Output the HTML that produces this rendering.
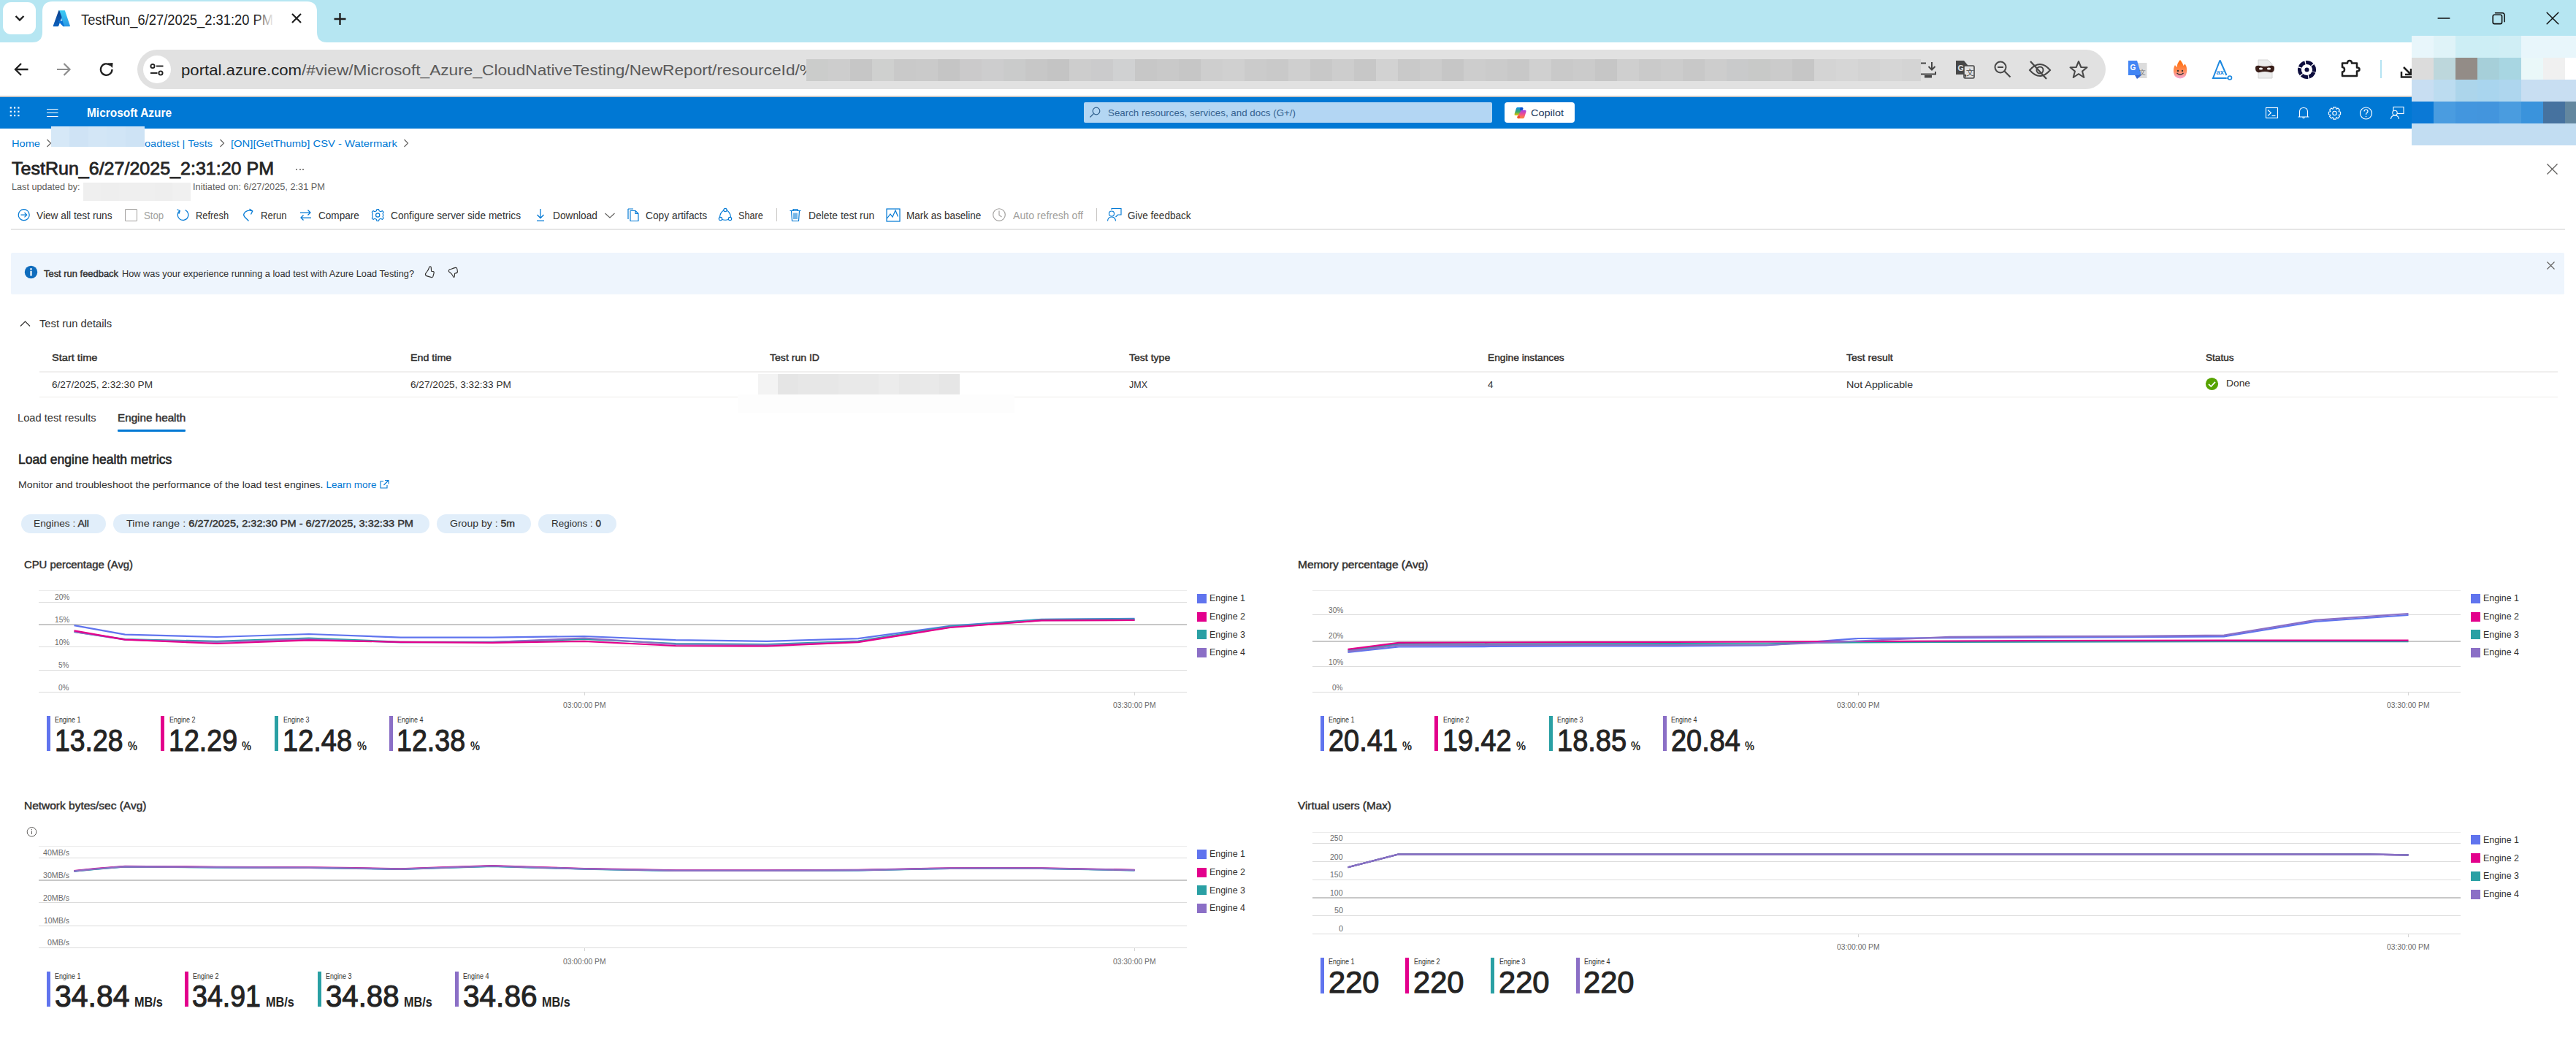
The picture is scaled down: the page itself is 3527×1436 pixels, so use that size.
<!DOCTYPE html>
<html><head><meta charset="utf-8"><title>TestRun_6/27/2025_2:31:20 PM</title>
<style>
html,body{margin:0;padding:0;}
body{width:3527px;height:1436px;overflow:hidden;position:relative;background:#fff;font-family:"Liberation Sans",sans-serif;}
.t{position:absolute;white-space:pre;transform-origin:0 0;}
.t b{font-weight:700;}
.r{position:absolute;}
</style></head><body>
<div class="r" style="left:0px;top:0px;width:3527px;height:58px;background:#b6e6f2;"></div>
<div class="r" style="left:4px;top:3px;width:45px;height:44px;background:#ffffff;border-radius:11px;"></div>
<svg class="r" style="left:18px;top:18px;" width="18" height="14" viewBox="0 0 18 14"><path d="M3.5 4 L9 9.5 L14.5 4" fill="none" stroke="#1f1f1f" stroke-width="2.4"/></svg>
<svg class="r" style="left:44px;top:0px;" width="405" height="58" viewBox="0 0 405 58"><path d="M0 58 Q14 58 14 44 L14 16 Q14 2 28 2 L376 2 Q390 2 390 16 L390 44 Q390 58 404 58 Z" fill="#fff"/></svg>
<svg class="r" style="left:72px;top:13px;" width="25" height="24" viewBox="0 0 25 24"><defs><linearGradient id="az1" x1="0" y1="0" x2="0" y2="1"><stop offset="0" stop-color="#0a3f8a"/><stop offset="1" stop-color="#0f62be"/></linearGradient><linearGradient id="az2" x1="0" y1="0" x2="0" y2="1"><stop offset="0" stop-color="#3ccbf4"/><stop offset="1" stop-color="#2b98e4"/></linearGradient></defs><path d="M8.6 1.2 L16.8 1.2 L24 22.6 Q24 23.2 23.2 23.2 L15.2 23.2 Z" fill="url(#az2)"/><path d="M8.4 1.2 Q9.3 1.2 9.6 2.2 L12.6 10.5 L8.3 22.4 Q8 23.2 7.2 23.2 L1.2 23.2 Q0.4 23.2 0.7 22.4 Z" fill="url(#az1)"/><path d="M7.6 15.4 L13.6 15.4 L16.1 23.2 L14.8 23.2 Q14.4 23.2 14 22.8 L9.4 18 Z" fill="#0b74d8"/></svg>
<div class="t" style="left:111.00px;top:16.57px;font-size:20px;line-height:20px;color:#1f1f1f;transform:scaleX(0.9168);">TestRun_6/27/2025_2:31:20 PM</div>
<div class="r" style="left:350px;top:10px;width:30px;height:32px;background:linear-gradient(90deg,rgba(255,255,255,0),#fff 85%);"></div>
<svg class="r" style="left:398px;top:17px;" width="16" height="16" viewBox="0 0 16 16"><path d="M2 2 L14 14 M14 2 L2 14" stroke="#1f1f1f" stroke-width="2.2"/></svg>
<svg class="r" style="left:456px;top:17px;" width="19" height="18" viewBox="0 0 19 18"><path d="M9.5 1 V17 M1.5 9 H17.5" stroke="#1f1f1f" stroke-width="2.4"/></svg>
<svg class="r" style="left:3336px;top:15px;" width="20" height="20" viewBox="0 0 20 20"><path d="M2.2 10 H17.8" stroke="#111" stroke-width="1.6" stroke-linecap="round"/></svg>
<svg class="r" style="left:3410px;top:15px;" width="22" height="21" viewBox="0 0 22 21"><rect x="3.2" y="5.2" width="12.4" height="12.4" rx="2.2" fill="none" stroke="#111" stroke-width="1.6"/><path d="M6.6 2.8 H16.2 Q19 2.8 19 5.8 V14.8" fill="none" stroke="#111" stroke-width="1.6" stroke-linecap="round"/></svg>
<svg class="r" style="left:3485px;top:15px;" width="20" height="20" viewBox="0 0 20 20"><path d="M2.2 2.2 L17.8 17.8 M17.8 2.2 L2.2 17.8" stroke="#111" stroke-width="1.5" stroke-linecap="round"/></svg>
<div class="r" style="left:0px;top:58px;width:3527px;height:73px;background:#ffffff;"></div>
<div class="r" style="left:0px;top:131px;width:3527px;height:2px;background:#c9c9c9;"></div>
<svg class="r" style="left:18px;top:84px;" width="24" height="22" viewBox="0 0 24 22"><path d="M20.5 11 H3.5 M11 3 L3 11 L11 19" fill="none" stroke="#1f1f1f" stroke-width="2.3"/></svg>
<svg class="r" style="left:75px;top:84px;" width="24" height="22" viewBox="0 0 24 22"><path d="M3 11 H20 M12.5 3 L20.5 11 L12.5 19" fill="none" stroke="#8d8d8d" stroke-width="2.2"/></svg>
<svg class="r" style="left:134px;top:83px;" width="24" height="24" viewBox="0 0 24 24"><path d="M19.5 12 A7.8 7.8 0 1 1 16.8 6.2" fill="none" stroke="#1f1f1f" stroke-width="2.3"/><path d="M13.5 3.5 L20.5 3 L20 10 Z" fill="#1f1f1f"/></svg>
<div class="r" style="left:188px;top:68px;width:2695px;height:54px;background:#e1e1e1;border-radius:27px;"></div>
<div class="r" style="left:196px;top:76px;width:38px;height:38px;border-radius:50%;background:#fff;"></div>
<svg class="r" style="left:204px;top:86px;" width="22" height="19" viewBox="0 0 22 19"><circle cx="5" cy="4.5" r="2.6" fill="none" stroke="#1f1f1f" stroke-width="1.9"/><path d="M10 4.5 H19.5" stroke="#1f1f1f" stroke-width="1.9"/><circle cx="16" cy="14" r="2.6" fill="none" stroke="#1f1f1f" stroke-width="1.9"/><path d="M2 14 H11.5" stroke="#1f1f1f" stroke-width="1.9"/></svg>
<div class="t" style="left:248.00px;top:85.22px;font-size:21px;line-height:21px;color:#1f1f1f;transform:scaleX(1.0550);">portal.azure.com</div>
<div class="t" style="left:413.00px;top:85.22px;font-size:21px;line-height:21px;color:#5a5a5a;transform:scaleX(1.0798);">/#view/Microsoft_Azure_CloudNativeTesting/NewReport/resourceId/%</div>
<div class="r" style="left:1104px;top:81px;width:30px;height:30px;background:#cbcccb;"></div>
<div class="r" style="left:1134px;top:81px;width:30px;height:30px;background:#cdcdcd;"></div>
<div class="r" style="left:1164px;top:81px;width:30px;height:30px;background:#c6c6c6;"></div>
<div class="r" style="left:1194px;top:81px;width:30px;height:30px;background:#cfd0cf;"></div>
<div class="r" style="left:1224px;top:81px;width:30px;height:30px;background:#c9c9c9;"></div>
<div class="r" style="left:1254px;top:81px;width:30px;height:30px;background:#cacaca;"></div>
<div class="r" style="left:1284px;top:81px;width:30px;height:30px;background:#c5c5c5;"></div>
<div class="r" style="left:1314px;top:81px;width:30px;height:30px;background:#cbcacb;"></div>
<div class="r" style="left:1344px;top:81px;width:30px;height:30px;background:#cdcdce;"></div>
<div class="r" style="left:1374px;top:81px;width:30px;height:30px;background:#cacbcb;"></div>
<div class="r" style="left:1404px;top:81px;width:30px;height:30px;background:#c7c7c7;"></div>
<div class="r" style="left:1434px;top:81px;width:30px;height:30px;background:#c4c4c4;"></div>
<div class="r" style="left:1464px;top:81px;width:30px;height:30px;background:#cdcdcd;"></div>
<div class="r" style="left:1494px;top:81px;width:30px;height:30px;background:#cbcbcc;"></div>
<div class="r" style="left:1524px;top:81px;width:30px;height:30px;background:#d0d1d2;"></div>
<div class="r" style="left:1554px;top:81px;width:30px;height:30px;background:#c7c7c7;"></div>
<div class="r" style="left:1584px;top:81px;width:30px;height:30px;background:#c9c9c9;"></div>
<div class="r" style="left:1614px;top:81px;width:30px;height:30px;background:#c6c6c6;"></div>
<div class="r" style="left:1644px;top:81px;width:30px;height:30px;background:#cecece;"></div>
<div class="r" style="left:1674px;top:81px;width:30px;height:30px;background:#d0d0d0;"></div>
<div class="r" style="left:1704px;top:81px;width:30px;height:30px;background:#cbcbcb;"></div>
<div class="r" style="left:1734px;top:81px;width:30px;height:30px;background:#c9c9c9;"></div>
<div class="r" style="left:1764px;top:81px;width:30px;height:30px;background:#cfcfcf;"></div>
<div class="r" style="left:1794px;top:81px;width:30px;height:30px;background:#c8c8c8;"></div>
<div class="r" style="left:1824px;top:81px;width:30px;height:30px;background:#cdcdcd;"></div>
<div class="r" style="left:1854px;top:81px;width:30px;height:30px;background:#c7c7c7;"></div>
<div class="r" style="left:1884px;top:81px;width:30px;height:30px;background:#d2d2d2;"></div>
<div class="r" style="left:1914px;top:81px;width:30px;height:30px;background:#c9c9c9;"></div>
<div class="r" style="left:1944px;top:81px;width:30px;height:30px;background:#cccccc;"></div>
<div class="r" style="left:1974px;top:81px;width:30px;height:30px;background:#c6c6c6;"></div>
<div class="r" style="left:2004px;top:81px;width:30px;height:30px;background:#cdcdcd;"></div>
<div class="r" style="left:2034px;top:81px;width:30px;height:30px;background:#cbcbcb;"></div>
<div class="r" style="left:2064px;top:81px;width:30px;height:30px;background:#c8c8c8;"></div>
<div class="r" style="left:2094px;top:81px;width:30px;height:30px;background:#d0d0d0;"></div>
<div class="r" style="left:2124px;top:81px;width:30px;height:30px;background:#c9c9c9;"></div>
<div class="r" style="left:2154px;top:81px;width:30px;height:30px;background:#cbcbcb;"></div>
<div class="r" style="left:2184px;top:81px;width:30px;height:30px;background:#c6c6c6;"></div>
<div class="r" style="left:2214px;top:81px;width:30px;height:30px;background:#cfcfcf;"></div>
<div class="r" style="left:2244px;top:81px;width:30px;height:30px;background:#cacaca;"></div>
<div class="r" style="left:2274px;top:81px;width:30px;height:30px;background:#cccccc;"></div>
<div class="r" style="left:2304px;top:81px;width:30px;height:30px;background:#c8c8c8;"></div>
<div class="r" style="left:2334px;top:81px;width:30px;height:30px;background:#cdcdcd;"></div>
<div class="r" style="left:2364px;top:81px;width:30px;height:30px;background:#c9cacb;"></div>
<div class="r" style="left:2394px;top:81px;width:30px;height:30px;background:#c8c9c8;"></div>
<div class="r" style="left:2424px;top:81px;width:30px;height:30px;background:#cbcbcb;"></div>
<div class="r" style="left:2454px;top:81px;width:30px;height:30px;background:#c6c6c6;"></div>
<div class="r" style="left:2484px;top:81px;width:30px;height:30px;background:#d4d4d4;"></div>
<div class="r" style="left:2514px;top:81px;width:30px;height:30px;background:#d6d6d6;"></div>
<div class="r" style="left:2544px;top:81px;width:30px;height:30px;background:#d3d3d3;"></div>
<div class="r" style="left:2574px;top:81px;width:30px;height:30px;background:#d6d6d6;"></div>
<div class="r" style="left:2604px;top:81px;width:26px;height:30px;background:#d4d4d4;"></div>
<svg class="r" style="left:2628px;top:83px;" width="26" height="26" viewBox="0 0 26 26"><path d="M2 3.5 H9" stroke="#474747" stroke-width="2"/><path d="M17 2 V12 M12.5 8 L17 12.5 L21.5 8" fill="none" stroke="#474747" stroke-width="2"/><path d="M2 18.5 H22 V15" fill="none" stroke="#474747" stroke-width="2"/><rect x="7" y="20" width="10" height="3.5" fill="#474747"/></svg>
<svg class="r" style="left:2676px;top:81px;" width="30" height="30" viewBox="0 0 30 30"><path d="M2 2 H13 L18 8 V21 H2 Z" fill="#474747"/><text x="4.5" y="16" font-family="Liberation Sans" font-weight="700" font-size="11" fill="#e1e1e1">G</text><rect x="13" y="9" width="14" height="17" rx="1.5" fill="#e1e1e1" stroke="#474747" stroke-width="1.6"/><text x="15.5" y="22" font-family="Liberation Sans" font-size="11" fill="#474747">文</text><path d="M13 21 L16 26 V21" fill="#474747"/></svg>
<svg class="r" style="left:2729px;top:82px;" width="26" height="27" viewBox="0 0 26 27"><circle cx="10" cy="10" r="7.5" fill="none" stroke="#474747" stroke-width="2"/><path d="M6 10 H14" stroke="#474747" stroke-width="2"/><path d="M15.5 15.5 L23.5 23.5" stroke="#474747" stroke-width="2.2"/></svg>
<svg class="r" style="left:2777px;top:82px;" width="32" height="28" viewBox="0 0 32 28"><path d="M2 14 Q16 -2 30 14 Q16 30 2 14 Z" fill="none" stroke="#474747" stroke-width="2"/><circle cx="16" cy="14" r="4.5" fill="none" stroke="#474747" stroke-width="2"/><path d="M3 2 L25 26" stroke="#474747" stroke-width="2.2"/></svg>
<svg class="r" style="left:2831px;top:81px;" width="30" height="29" viewBox="0 0 30 29"><path d="M15 3 L18.3 11 L26.5 11.3 L20 16.6 L22.3 25 L15 20.2 L7.7 25 L10 16.6 L3.5 11.3 L11.7 11 Z" fill="none" stroke="#474747" stroke-width="2" stroke-linejoin="round"/></svg>
<svg class="r" style="left:2912px;top:81px;" width="30" height="28" viewBox="0 0 30 28"><rect x="13" y="5" width="14.5" height="21" fill="#dcdcdc"/><path d="M2 2 H14 L20 22 H2 Z" fill="#4285f4"/><path d="M11 22 H20 L14 27 Z" fill="#3367d6"/><text x="4.5" y="15" font-family="Liberation Sans" font-weight="700" font-size="10" fill="#fff">G</text><text x="17" y="21" font-family="Liberation Sans" font-size="9" fill="#777">文</text></svg>
<svg class="r" style="left:2974px;top:81px;" width="22" height="28" viewBox="0 0 22 28"><defs><linearGradient id="fg" x1="0" y1="0" x2="0" y2="1"><stop offset="0" stop-color="#ff6a00"/><stop offset="0.6" stop-color="#ff8c5a"/><stop offset="1" stop-color="#f7a8d8"/></linearGradient></defs><path d="M11 1 Q15 6 15.5 9 Q17.5 6 18 7 Q21 12 20 18 Q19 26 11 26.5 Q3 26 2 18 Q1.5 12 4 8 Q5 10 6.5 11 Q7 5 11 1 Z" fill="url(#fg)"/><circle cx="8" cy="16" r="1.2" fill="#333"/><circle cx="14" cy="16" r="1.2" fill="#333"/><path d="M6.5 19 Q11 23.5 15.5 19" fill="none" stroke="#333" stroke-width="1.3"/></svg>
<svg class="r" style="left:3028px;top:81px;" width="30" height="29" viewBox="0 0 30 29"><path d="M11.5 1.5 L2 26 H20" fill="none" stroke="#1c88e0" stroke-width="2"/><path d="M11.5 1.5 L20.5 22" fill="none" stroke="#1c88e0" stroke-width="2"/><circle cx="25" cy="25.5" r="2.5" fill="#fff" stroke="#1c88e0" stroke-width="1.6"/><path d="M20 26 H22.5" stroke="#1c88e0" stroke-width="1.6"/><text x="6.5" y="21" font-family="Liberation Sans" font-weight="700" font-size="9.5" fill="#1c88e0">ax</text></svg>
<svg class="r" style="left:3087px;top:81px;" width="28" height="28" viewBox="0 0 28 28"><path d="M5 1 H18 L24 7 V26 H5 Z" fill="#ececec" stroke="#d4d4d4" stroke-width="1"/><path d="M1 12 Q1 8 7 9 Q14 11 21 9 Q27 8 27 12 Q27 19 21 18 Q14 16 7 18 Q1 19 1 12 Z" fill="#3a1f1a"/><ellipse cx="8.5" cy="13" rx="2.6" ry="1.6" fill="#fff"/><ellipse cx="19.5" cy="13" rx="2.6" ry="1.6" fill="#fff"/></svg>
<svg class="r" style="left:3145px;top:82px;" width="27" height="27" viewBox="0 0 27 27"><circle cx="13.5" cy="13.5" r="10" fill="none" stroke="#0d0d3d" stroke-width="5" stroke-dasharray="9.2 1.3" transform="rotate(20 13.5 13.5)"/><circle cx="13.5" cy="13.5" r="3" fill="#0d0d3d"/></svg>
<svg class="r" style="left:3204px;top:80px;" width="28" height="28" viewBox="0 0 28 28"><path d="M3 6.5 H10 Q10 3 13 3 Q16 3 16 6.5 H23 V12.5 Q26.5 12.5 26.5 15 Q26.5 17.5 23 17.5 V24 H3 V18.5 Q6 18.5 6 15.3 Q6 12 3 12 Z" fill="none" stroke="#1f1f1f" stroke-width="2.5" stroke-linejoin="round"/></svg>
<div class="r" style="left:3259px;top:82px;width:2px;height:25px;background:#b5e3f2;"></div>
<svg class="r" style="left:3286px;top:82px;" width="17" height="27" viewBox="0 0 17 27"><path d="M5 10 L15 20 M15 12 V20 H7" fill="none" stroke="#1f1f1f" stroke-width="2.5"/><path d="M2 16 V23.5 H16" fill="none" stroke="#1f1f1f" stroke-width="2.5"/></svg>
<div class="r" style="left:0px;top:133px;width:3527px;height:43px;background:#0078d4;"></div>
<svg class="r" style="left:12px;top:145px;" width="16" height="16" viewBox="0 0 16 16"><rect x="1.70" y="1.40" width="2.2" height="2.2" fill="#fff"/><rect x="7.00" y="1.40" width="2.2" height="2.2" fill="#fff"/><rect x="12.30" y="1.40" width="2.2" height="2.2" fill="#fff"/><rect x="1.70" y="6.70" width="2.2" height="2.2" fill="#fff"/><rect x="7.00" y="6.70" width="2.2" height="2.2" fill="#fff"/><rect x="12.30" y="6.70" width="2.2" height="2.2" fill="#fff"/><rect x="1.70" y="12.00" width="2.2" height="2.2" fill="#fff"/><rect x="7.00" y="12.00" width="2.2" height="2.2" fill="#fff"/><rect x="12.30" y="12.00" width="2.2" height="2.2" fill="#fff"/></svg>
<svg class="r" style="left:63px;top:147px;" width="18" height="14" viewBox="0 0 18 14"><path d="M1 2.5 H16.5 M1 7.5 H16.5 M1 12.5 H16.5" stroke="#fff" stroke-width="1.2"/></svg>
<div class="t" style="left:119.00px;top:146.31px;font-size:17px;line-height:17px;font-weight:700;color:#ffffff;transform:scaleX(0.9075);">Microsoft Azure</div>
<div class="r" style="left:1484px;top:140px;width:559px;height:28px;background:#b3d6f3;border-radius:2px;"></div>
<svg class="r" style="left:1490px;top:145px;" width="18" height="18" viewBox="0 0 18 18"><circle cx="11" cy="7" r="4.8" fill="none" stroke="#2f5e8c" stroke-width="1.2"/><path d="M7.6 10.4 L2.5 15.5" stroke="#2f5e8c" stroke-width="1.3"/></svg>
<div class="t" style="left:1516.50px;top:147.87px;font-size:13.5px;line-height:13.5px;color:#36628f;transform:scaleX(0.9885);">Search resources, services, and docs (G+/)</div>
<div class="r" style="left:2060px;top:140px;width:96px;height:28px;background:#ffffff;border-radius:4px;"></div>
<svg class="r" style="left:2071px;top:145px;" width="20" height="19" viewBox="0 0 20 19"><defs><linearGradient id="cp1" x1="0" y1="0" x2="0" y2="1"><stop offset="0" stop-color="#0a8ff0"/><stop offset="0.55" stop-color="#3aa76a"/><stop offset="1" stop-color="#f0c800"/></linearGradient><linearGradient id="cp2" x1="0" y1="0" x2="0" y2="1"><stop offset="0" stop-color="#a23ee6"/><stop offset="0.5" stop-color="#f0508c"/><stop offset="1" stop-color="#ff8a3a"/></linearGradient></defs><path d="M6.5 2 H12.5 Q15 2 14.2 4.5 L10.5 13 H4 Q2 13 2.6 11 L4.8 3.8 Q5.3 2 6.5 2 Z" fill="url(#cp1)"/><path d="M10.5 2 H12.5 Q15 2 14.2 4.5 L13.6 6 H10 Z" fill="#0a3fd0" opacity="0.8"/><path d="M12.6 5.8 H17 Q19 5.8 18.5 8 L16.2 15.6 Q15.8 17.2 14.2 17.2 H7.2 Q5.8 17.2 6.6 15.6 L11 7.2 Q11.6 5.8 12.6 5.8 Z" fill="url(#cp2)"/><circle cx="8.3" cy="15.2" r="2" fill="#f04a2a" opacity="0.85"/></svg>
<div class="t" style="left:2096.00px;top:148.07px;font-size:13.5px;line-height:13.5px;color:#1d3557;transform:scaleX(1.0708);">Copilot</div>
<svg class="r" style="left:3100px;top:145px;" width="22" height="20" viewBox="0 0 22 20"><rect x="2.5" y="2.5" width="16" height="14" fill="none" stroke="#fff" stroke-width="1.1"/><path d="M5 5.5 L9.5 9.5 L5 13.5" fill="none" stroke="#fff" stroke-width="1.1"/><path d="M10.5 13.5 H15.5" stroke="#fff" stroke-width="1.1"/></svg>
<svg class="r" style="left:3144px;top:145px;" width="20" height="20" viewBox="0 0 20 20"><path d="M4.5 15 V8 Q4.5 2.5 10 2.5 Q15.5 2.5 15.5 8 V15 H17 H3 Z" fill="none" stroke="#fff" stroke-width="1.1" stroke-linejoin="round"/><path d="M8.5 15.5 Q10 18 11.5 15.5" fill="none" stroke="#fff" stroke-width="1.1"/></svg>
<svg class="r" style="left:3186px;top:145px;" width="21" height="20" viewBox="0 0 21 20"><circle cx="10.5" cy="10" r="2.7" fill="none" stroke="#fff" stroke-width="1.1"/><path d="M18.60 8.19 L18.60 11.81 L16.30 12.18 L16.15 12.56 L17.51 14.45 L14.95 17.01 L13.06 15.65 L12.68 15.80 L12.31 18.10 L8.69 18.10 L8.32 15.80 L7.94 15.65 L6.05 17.01 L3.49 14.45 L4.85 12.56 L4.70 12.18 L2.40 11.81 L2.40 8.19 L4.70 7.82 L4.85 7.44 L3.49 5.55 L6.05 2.99 L7.94 4.35 L8.32 4.20 L8.69 1.90 L12.31 1.90 L12.68 4.20 L13.06 4.35 L14.95 2.99 L17.51 5.55 L16.15 7.44 L16.30 7.82 Z" fill="none" stroke="#fff" stroke-width="1.1" stroke-linejoin="round"/></svg>
<svg class="r" style="left:3229px;top:145px;" width="21" height="20" viewBox="0 0 21 20"><circle cx="10.5" cy="10" r="8" fill="none" stroke="#fff" stroke-width="1.2"/><path d="M8 7.5 Q8 5 10.5 5 Q13 5 13 7.5 Q13 9 11 10 Q10.5 10.5 10.5 12" fill="none" stroke="#fff" stroke-width="1.2"/><circle cx="10.5" cy="14.5" r="0.8" fill="#fff"/></svg>
<svg class="r" style="left:3272px;top:145px;" width="21" height="20" viewBox="0 0 21 20"><rect x="5" y="1.5" width="14" height="9" fill="none" stroke="#fff" stroke-width="1.1"/><circle cx="7" cy="9.5" r="3.2" fill="#0078d4" stroke="#fff" stroke-width="1.1"/><path d="M1.5 18 Q2 13 7 13 Q12 13 12.5 18" fill="none" stroke="#fff" stroke-width="1.1"/></svg>
<div class="r" style="left:3302px;top:49px;width:30px;height:30px;background:#e8f6fb;"></div>
<div class="r" style="left:3332px;top:49px;width:30px;height:30px;background:#dff3f8;"></div>
<div class="r" style="left:3362px;top:49px;width:30px;height:30px;background:#cdeef5;"></div>
<div class="r" style="left:3392px;top:49px;width:30px;height:30px;background:#cdeef5;"></div>
<div class="r" style="left:3422px;top:49px;width:30px;height:30px;background:#d0eef5;"></div>
<div class="r" style="left:3452px;top:49px;width:30px;height:30px;background:#e8f6fb;"></div>
<div class="r" style="left:3482px;top:49px;width:30px;height:30px;background:#e8f6fb;"></div>
<div class="r" style="left:3512px;top:49px;width:15px;height:30px;background:#e8f6fb;"></div>
<div class="r" style="left:3302px;top:79px;width:30px;height:30px;background:#dcdcdc;"></div>
<div class="r" style="left:3332px;top:79px;width:30px;height:30px;background:#bdd7dc;"></div>
<div class="r" style="left:3362px;top:79px;width:30px;height:30px;background:#938c87;"></div>
<div class="r" style="left:3392px;top:79px;width:30px;height:30px;background:#a6cfd9;"></div>
<div class="r" style="left:3422px;top:79px;width:30px;height:30px;background:#a8d6e2;"></div>
<div class="r" style="left:3452px;top:79px;width:30px;height:30px;background:#eaf8f9;"></div>
<div class="r" style="left:3482px;top:79px;width:30px;height:30px;background:#f0f0f0;"></div>
<div class="r" style="left:3512px;top:79px;width:15px;height:30px;background:#ffffff;"></div>
<div class="r" style="left:3302px;top:109px;width:30px;height:30px;background:#c8def2;"></div>
<div class="r" style="left:3332px;top:109px;width:30px;height:30px;background:#bcdcf0;"></div>
<div class="r" style="left:3362px;top:109px;width:30px;height:30px;background:#acd5eb;"></div>
<div class="r" style="left:3392px;top:109px;width:30px;height:30px;background:#a9d5ee;"></div>
<div class="r" style="left:3422px;top:109px;width:30px;height:30px;background:#aed6ee;"></div>
<div class="r" style="left:3452px;top:109px;width:30px;height:30px;background:#c8def2;"></div>
<div class="r" style="left:3482px;top:109px;width:30px;height:30px;background:#c8def2;"></div>
<div class="r" style="left:3512px;top:109px;width:15px;height:30px;background:#c8def2;"></div>
<div class="r" style="left:3302px;top:139px;width:30px;height:30px;background:#0b79d6;"></div>
<div class="r" style="left:3332px;top:139px;width:30px;height:30px;background:#4a9ce0;"></div>
<div class="r" style="left:3362px;top:139px;width:30px;height:30px;background:#4396de;"></div>
<div class="r" style="left:3392px;top:139px;width:30px;height:30px;background:#4395dd;"></div>
<div class="r" style="left:3422px;top:139px;width:30px;height:30px;background:#4a9cdf;"></div>
<div class="r" style="left:3452px;top:139px;width:30px;height:30px;background:#3a93dc;"></div>
<div class="r" style="left:3482px;top:139px;width:30px;height:30px;background:#46729f;"></div>
<div class="r" style="left:3512px;top:139px;width:15px;height:30px;background:#63879f;"></div>
<div class="r" style="left:3302px;top:169px;width:30px;height:30px;background:#c2ddf2;"></div>
<div class="r" style="left:3332px;top:169px;width:30px;height:30px;background:#c2ddf2;"></div>
<div class="r" style="left:3362px;top:169px;width:30px;height:30px;background:#c2ddf2;"></div>
<div class="r" style="left:3392px;top:169px;width:30px;height:30px;background:#c2ddf2;"></div>
<div class="r" style="left:3422px;top:169px;width:30px;height:30px;background:#c2ddf2;"></div>
<div class="r" style="left:3452px;top:169px;width:30px;height:30px;background:#c2ddf2;"></div>
<div class="r" style="left:3482px;top:169px;width:30px;height:30px;background:#c2ddf2;"></div>
<div class="r" style="left:3512px;top:169px;width:15px;height:30px;background:#c2ddf2;"></div>
<div class="r" style="left:70px;top:173px;width:26px;height:28px;background:#d6e8f7;"></div>
<div class="r" style="left:95px;top:173px;width:26px;height:28px;background:#cfe3f5;"></div>
<div class="r" style="left:121px;top:173px;width:26px;height:28px;background:#d3e6f6;"></div>
<div class="r" style="left:146px;top:173px;width:26px;height:28px;background:#d1e5f6;"></div>
<div class="r" style="left:172px;top:173px;width:26px;height:28px;background:#cee3f5;"></div>
<div class="t" style="left:16.00px;top:189.57px;font-size:13.5px;line-height:13.5px;color:#0078d4;transform:scaleX(1.0830);">Home</div>
<svg class="r" style="left:63px;top:190px;" width="8" height="12" viewBox="0 0 8 12"><path d="M1.5 1 L6.5 6 L1.5 11" fill="none" stroke="#605e5c" stroke-width="1.1"/></svg>
<div class="t" style="left:198.00px;top:189.57px;font-size:13.5px;line-height:13.5px;color:#0078d4;transform:scaleX(1.0744);">oadtest | Tests</div>
<svg class="r" style="left:300px;top:190px;" width="8" height="12" viewBox="0 0 8 12"><path d="M1.5 1 L6.5 6 L1.5 11" fill="none" stroke="#605e5c" stroke-width="1.1"/></svg>
<div class="t" style="left:315.60px;top:189.57px;font-size:13.5px;line-height:13.5px;color:#0078d4;transform:scaleX(1.0950);">[ON][GetThumb] CSV - Watermark</div>
<svg class="r" style="left:552px;top:190px;" width="8" height="12" viewBox="0 0 8 12"><path d="M1.5 1 L6.5 6 L1.5 11" fill="none" stroke="#605e5c" stroke-width="1.1"/></svg>
<div class="t" style="left:16.00px;top:218.66px;font-size:24.5px;line-height:24.5px;-webkit-text-stroke:0.78px #242424;color:#242424;transform:scaleX(1.0216);">TestRun_6/27/2025_2:31:20 PM</div>
<div class="r" style="left:405px;top:231px;width:2px;height:2px;background:#605e5c;border-radius:1px;"></div>
<div class="r" style="left:409.5px;top:231px;width:2px;height:2px;background:#605e5c;border-radius:1px;"></div>
<div class="r" style="left:414px;top:231px;width:2px;height:2px;background:#605e5c;border-radius:1px;"></div>
<div class="t" style="left:16.00px;top:250.42px;font-size:12.5px;line-height:12.5px;color:#605e5c;transform:scaleX(1.0116);">Last updated by:</div>
<div class="r" style="left:114px;top:250px;width:25px;height:25px;background:#efefef;"></div>
<div class="r" style="left:138px;top:250px;width:25px;height:25px;background:#eeeeee;"></div>
<div class="r" style="left:163px;top:250px;width:25px;height:25px;background:#efefef;"></div>
<div class="r" style="left:187px;top:250px;width:25px;height:25px;background:#efefef;"></div>
<div class="r" style="left:212px;top:250px;width:25px;height:25px;background:#eeeeee;"></div>
<div class="r" style="left:236px;top:250px;width:25px;height:25px;background:#f0f0f0;"></div>
<div class="t" style="left:264.40px;top:250.42px;font-size:12.5px;line-height:12.5px;color:#605e5c;transform:scaleX(1.0214);">Initiated on: 6/27/2025, 2:31 PM</div>
<svg class="r" style="left:3486px;top:223px;" width="17" height="17" viewBox="0 0 17 17"><path d="M1.5 1.5 L15.5 15.5 M15.5 1.5 L1.5 15.5" stroke="#605e5c" stroke-width="1.3"/></svg>
<div class="t" style="left:50.00px;top:287.85px;font-size:14px;line-height:14px;color:#323130;transform:scaleX(0.9814);">View all test runs</div>
<svg class="r" style="left:24px;top:285px;" width="18" height="18" viewBox="0 0 18 18"><circle cx="8.7" cy="9.2" r="7.5" fill="none" stroke="#0078d4" stroke-width="1.2"/><path d="M4.5 9.2 H12.5 M9.5 6 L12.7 9.2 L9.5 12.4" fill="none" stroke="#0078d4" stroke-width="1.2"/></svg>
<div class="r" style="left:171px;top:286px;width:17px;height:17px;background:transparent;box-sizing:border-box;border:1.2px solid #a19f9d;border-radius:1px;"></div>
<div class="t" style="left:197.00px;top:287.85px;font-size:14px;line-height:14px;color:#a19f9d;transform:scaleX(0.9444);">Stop</div>
<svg class="r" style="left:240px;top:284px;" width="21" height="20" viewBox="0 0 21 20"><path d="M6 4.5 A7.3 7.3 0 1 0 13.5 3.5" fill="none" stroke="#0078d4" stroke-width="1.25"/><path d="M2.5 2.7 L6.3 4.5 L5 8.6" fill="none" stroke="#0078d4" stroke-width="1.25"/></svg>
<div class="t" style="left:268.00px;top:287.85px;font-size:14px;line-height:14px;color:#323130;transform:scaleX(0.9200);">Refresh</div>
<svg class="r" style="left:331px;top:284px;" width="18" height="20" viewBox="0 0 18 20"><path d="M14.5 5 Q9 3 5 6 Q1 9.5 4 13 L9.5 18.5" fill="none" stroke="#0078d4" stroke-width="1.25"/><path d="M10.5 2 L14.8 5 L12.5 9.5" fill="none" stroke="#0078d4" stroke-width="1.25"/></svg>
<div class="t" style="left:356.50px;top:287.85px;font-size:14px;line-height:14px;color:#323130;transform:scaleX(0.9336);">Rerun</div>
<svg class="r" style="left:409px;top:285px;" width="19" height="19" viewBox="0 0 19 19"><path d="M2 6 H16 M12.5 2.5 L16 6 L12.5 9.5" fill="none" stroke="#0078d4" stroke-width="1.25"/><path d="M17 13 H3 M6.5 9.5 L3 13 L6.5 16.5" fill="none" stroke="#0078d4" stroke-width="1.25"/></svg>
<div class="t" style="left:435.50px;top:287.85px;font-size:14px;line-height:14px;color:#323130;transform:scaleX(0.9708);">Compare</div>
<svg class="r" style="left:508px;top:285px;" width="19" height="19" viewBox="0 0 19 19"><circle cx="9.2" cy="9.5" r="2.6" fill="none" stroke="#0078d4" stroke-width="1.15"/><path d="M8 1.5 H10.5 L11.2 3.8 L13.4 4.8 L15.5 3.6 L17.2 5.4 L16 7.5 L16.9 9.5 L16 11.6 L17.2 13.7 L15.5 15.4 L13.4 14.3 L11.2 15.2 L10.5 17.5 H8 L7.3 15.2 L5.1 14.3 L3 15.4 L1.3 13.7 L2.5 11.6 L1.6 9.5 L2.5 7.5 L1.3 5.4 L3 3.6 L5.1 4.8 L7.3 3.8 Z" fill="none" stroke="#0078d4" stroke-width="1.1" stroke-linejoin="round"/></svg>
<div class="t" style="left:535.00px;top:287.85px;font-size:14px;line-height:14px;color:#323130;transform:scaleX(0.9777);">Configure server side metrics</div>
<svg class="r" style="left:732px;top:284px;" width="16" height="20" viewBox="0 0 16 20"><path d="M8 2 V14.5 M3.5 10 L8 14.5 L12.5 10" fill="none" stroke="#0078d4" stroke-width="1.25"/><path d="M3 18.2 H13" stroke="#0078d4" stroke-width="1.25"/></svg>
<div class="t" style="left:757.00px;top:287.85px;font-size:14px;line-height:14px;color:#323130;transform:scaleX(0.9797);">Download</div>
<svg class="r" style="left:827px;top:290px;" width="16" height="10" viewBox="0 0 16 10"><path d="M1.5 2 L8 8 L14.5 2" fill="none" stroke="#605e5c" stroke-width="1.1"/></svg>
<svg class="r" style="left:857px;top:284px;" width="20" height="20" viewBox="0 0 20 20"><path d="M6 4.5 V18.5 H17 V8.5 L13 4.5 Z M13 4.5 V8.5 H17" fill="none" stroke="#0078d4" stroke-width="1.15" stroke-linejoin="round"/><path d="M3 2 V16 M3 2 H10" fill="none" stroke="#0078d4" stroke-width="1.15"/></svg>
<div class="t" style="left:883.50px;top:287.85px;font-size:14px;line-height:14px;color:#323130;transform:scaleX(0.9838);">Copy artifacts</div>
<svg class="r" style="left:983px;top:284px;" width="20" height="20" viewBox="0 0 20 20"><circle cx="10" cy="3.5" r="2.2" fill="none" stroke="#0078d4" stroke-width="1.15"/><circle cx="3.5" cy="15.5" r="2.2" fill="none" stroke="#0078d4" stroke-width="1.15"/><circle cx="16.5" cy="15.5" r="2.2" fill="none" stroke="#0078d4" stroke-width="1.15"/><path d="M7.8 4 Q3 7 2.5 13.3 M12.2 4 Q17 7 17.5 13.3 M5.7 16.5 Q10 18 14.3 16.5" fill="none" stroke="#0078d4" stroke-width="1.15"/></svg>
<div class="t" style="left:1011.20px;top:287.85px;font-size:14px;line-height:14px;color:#323130;transform:scaleX(0.9021);">Share</div>
<div class="r" style="left:1063px;top:285px;width:1px;height:18px;background:#c8c6c4;"></div>
<svg class="r" style="left:1080px;top:284px;" width="18" height="20" viewBox="0 0 18 20"><path d="M1.5 4.5 H16.5 M6 4.5 V2.5 H12 V4.5 M3.5 4.5 L4.5 18.5 H13.5 L14.5 4.5" fill="none" stroke="#0078d4" stroke-width="1.15" stroke-linejoin="round"/><path d="M7 7.5 V16 M9 7.5 V16 M11 7.5 V16" stroke="#0078d4" stroke-width="1.1"/></svg>
<div class="t" style="left:1106.90px;top:287.85px;font-size:14px;line-height:14px;color:#323130;transform:scaleX(0.9896);">Delete test run</div>
<svg class="r" style="left:1212px;top:284px;" width="22" height="20" viewBox="0 0 22 20"><rect x="2" y="2" width="18" height="17" fill="none" stroke="#0078d4" stroke-width="1.2"/><path d="M2.5 15 L7 9 L10 13 L14 4 L17.5 12.5" fill="none" stroke="#0078d4" stroke-width="1.2"/></svg>
<div class="t" style="left:1240.60px;top:287.85px;font-size:14px;line-height:14px;color:#323130;transform:scaleX(0.9667);">Mark as baseline</div>
<svg class="r" style="left:1358px;top:284px;" width="20" height="20" viewBox="0 0 20 20"><circle cx="10" cy="10" r="8.3" fill="none" stroke="#a19f9d" stroke-width="1.15"/><path d="M10 4.5 V10.5 L13.5 13" fill="none" stroke="#a19f9d" stroke-width="1.15"/></svg>
<div class="t" style="left:1386.50px;top:287.85px;font-size:14px;line-height:14px;color:#a19f9d;transform:scaleX(1.0056);">Auto refresh off</div>
<div class="r" style="left:1501px;top:285px;width:1px;height:18px;background:#c8c6c4;"></div>
<svg class="r" style="left:1515px;top:284px;" width="22" height="20" viewBox="0 0 22 20"><path d="M7 3 V1.5 H20 V10 H15.5 L12.5 13" fill="none" stroke="#0078d4" stroke-width="1.15"/><circle cx="7" cy="8.5" r="3.5" fill="none" stroke="#0078d4" stroke-width="1.15"/><path d="M1.5 18.5 Q2 13 7 13 Q12 13 12.5 18.5" fill="none" stroke="#0078d4" stroke-width="1.15"/></svg>
<div class="t" style="left:1544.20px;top:287.85px;font-size:14px;line-height:14px;color:#323130;transform:scaleX(0.9665);">Give feedback</div>
<div class="r" style="left:15px;top:313px;width:3497px;height:2px;background:#e6e6e6;"></div>
<div class="r" style="left:15px;top:346px;width:3496px;height:57px;background:#eef5fd;border-radius:2px;"></div>
<svg class="r" style="left:33px;top:363px;" width="19" height="19" viewBox="0 0 19 19"><circle cx="9.5" cy="9.5" r="8.7" fill="#0f6cbd"/><circle cx="9.5" cy="5.3" r="1.25" fill="#fff"/><rect x="8.4" y="7.8" width="2.2" height="6.8" fill="#fff"/></svg>
<div class="t" style="left:60.00px;top:368.00px;font-size:13px;line-height:13px;color:#323130;transform:scaleX(0.9940);"><span style="-webkit-text-stroke:0.42px #323130">Test run feedback</span></div>
<div class="t" style="left:167.00px;top:368.00px;font-size:13px;line-height:13px;color:#323130;transform:scaleX(0.9820);">How was your experience running a load test with Azure Load Testing?</div>
<svg class="r" style="left:579px;top:362px;" width="18" height="20" viewBox="0 0 18 20"><path d="M3.6 12.6 Q3 14.8 4.8 15.6 L11.6 17.6 Q13.4 18 13.9 16.4 L15.2 11.5 Q15.6 10 14 9.6 L11.6 9.2 L11.3 4.5 Q11.2 2.6 9.8 2.8 Q9 3 8.6 4.2 Q7.5 7.5 5.5 10 Z" fill="none" stroke="#323130" stroke-width="1.15" stroke-linejoin="round"/></svg>
<svg class="r" style="left:611px;top:362px;" width="18" height="20" viewBox="0 0 18 20"><path d="M4 10.3 Q2.6 9 3.8 7.5 Q5 6.4 7 6.2 Q10 5 12.6 4.4 Q14.4 4.2 14.8 6 L15.4 9.5 Q15.6 11.6 13.4 11.9 L11.6 12.2 L11.3 16.2 Q11.1 17.8 10.2 17.4 Q9.4 17 9 15.6 Q7.6 12.4 4 10.3 Z" fill="none" stroke="#323130" stroke-width="1.15" stroke-linejoin="round"/></svg>
<svg class="r" style="left:3486px;top:357px;" width="13" height="13" viewBox="0 0 13 13"><path d="M1.5 1.5 L11.5 11.5 M11.5 1.5 L1.5 11.5" stroke="#605e5c" stroke-width="1.1"/></svg>
<svg class="r" style="left:26px;top:436px;" width="17" height="13" viewBox="0 0 17 13"><path d="M2 10.5 L8.5 4 L15 10.5" fill="none" stroke="#323130" stroke-width="1.2"/></svg>
<div class="t" style="left:54.00px;top:436.15px;font-size:14px;line-height:14px;color:#323130;transform:scaleX(1.0535);">Test run details</div>
<div class="t" style="left:71.00px;top:482.50px;font-size:13px;line-height:13px;-webkit-text-stroke:0.42px #323130;color:#323130;transform:scaleX(1.1218);">Start time</div>
<div class="t" style="left:562.30px;top:482.50px;font-size:13px;line-height:13px;-webkit-text-stroke:0.42px #323130;color:#323130;transform:scaleX(1.0974);">End time</div>
<div class="t" style="left:1054.30px;top:482.50px;font-size:13px;line-height:13px;-webkit-text-stroke:0.42px #323130;color:#323130;transform:scaleX(1.0819);">Test run ID</div>
<div class="t" style="left:1545.70px;top:482.50px;font-size:13px;line-height:13px;-webkit-text-stroke:0.42px #323130;color:#323130;transform:scaleX(1.0802);">Test type</div>
<div class="t" style="left:2037.00px;top:482.50px;font-size:13px;line-height:13px;-webkit-text-stroke:0.42px #323130;color:#323130;transform:scaleX(1.0575);">Engine instances</div>
<div class="t" style="left:2528.30px;top:482.50px;font-size:13px;line-height:13px;-webkit-text-stroke:0.42px #323130;color:#323130;transform:scaleX(1.0752);">Test result</div>
<div class="t" style="left:3020.40px;top:482.50px;font-size:13px;line-height:13px;-webkit-text-stroke:0.42px #323130;color:#323130;transform:scaleX(1.0474);">Status</div>
<div class="r" style="left:54px;top:508px;width:3448px;height:2px;background:#f0efee;"></div>
<div class="r" style="left:54px;top:543px;width:3448px;height:1px;background:#edebe9;"></div>
<div class="t" style="left:71.00px;top:519.80px;font-size:13px;line-height:13px;color:#323130;transform:scaleX(1.0491);">6/27/2025, 2:32:30 PM</div>
<div class="t" style="left:562.30px;top:519.80px;font-size:13px;line-height:13px;color:#323130;transform:scaleX(1.0483);">6/27/2025, 3:32:33 PM</div>
<div class="r" style="left:1010px;top:540px;width:379px;height:25px;background:#fdfdfd;"></div>
<div class="r" style="left:1038px;top:512px;width:28px;height:28px;background:#f3f3f3;"></div>
<div class="r" style="left:1065px;top:512px;width:28px;height:28px;background:#e5e5e5;"></div>
<div class="r" style="left:1093px;top:512px;width:28px;height:28px;background:#e7e7e7;"></div>
<div class="r" style="left:1121px;top:512px;width:28px;height:28px;background:#e7e7e7;"></div>
<div class="r" style="left:1148px;top:512px;width:28px;height:28px;background:#e9e9e9;"></div>
<div class="r" style="left:1176px;top:512px;width:28px;height:28px;background:#e9e9e9;"></div>
<div class="r" style="left:1203px;top:512px;width:28px;height:28px;background:#ececec;"></div>
<div class="r" style="left:1231px;top:512px;width:28px;height:28px;background:#e8e8e8;"></div>
<div class="r" style="left:1259px;top:512px;width:28px;height:28px;background:#e9e9e9;"></div>
<div class="r" style="left:1286px;top:512px;width:28px;height:28px;background:#e6e6e6;"></div>
<div class="t" style="left:1545.70px;top:519.80px;font-size:13px;line-height:13px;color:#323130;transform:scaleX(0.9615);">JMX</div>
<div class="t" style="left:2037.00px;top:519.80px;font-size:13px;line-height:13px;color:#323130;transform:scaleX(1.0373);">4</div>
<div class="t" style="left:2528.30px;top:519.80px;font-size:13px;line-height:13px;color:#323130;transform:scaleX(1.0973);">Not Applicable</div>
<svg class="r" style="left:3019px;top:515.5px;" width="19" height="19" viewBox="0 0 19 19"><circle cx="9.5" cy="9.5" r="8.6" fill="#57a300"/><path d="M5 9.8 L8.3 13 L14 6.8" fill="none" stroke="#fff" stroke-width="1.7"/></svg>
<div class="t" style="left:3048.00px;top:517.60px;font-size:13px;line-height:13px;color:#323130;transform:scaleX(1.0618);">Done</div>
<div class="t" style="left:24.20px;top:565.15px;font-size:14px;line-height:14px;color:#323130;transform:scaleX(1.0475);">Load test results</div>
<div class="t" style="left:160.70px;top:565.15px;font-size:14px;line-height:14px;-webkit-text-stroke:0.45px #323130;color:#323130;transform:scaleX(1.0884);">Engine health</div>
<div class="r" style="left:161px;top:588px;width:93px;height:2.5px;background:#0078d4;border-radius:1px;"></div>
<div class="t" style="left:24.50px;top:619.76px;font-size:18px;line-height:18px;-webkit-text-stroke:0.58px #242424;color:#242424;transform:scaleX(0.9730);">Load engine health metrics</div>
<div class="t" style="left:24.50px;top:656.57px;font-size:13.5px;line-height:13.5px;color:#323130;transform:scaleX(1.0477);">Monitor and troubleshoot the performance of the load test engines.</div>
<div class="t" style="left:446.50px;top:656.57px;font-size:13.5px;line-height:13.5px;color:#0078d4;">Learn more</div>
<svg class="r" style="left:519px;top:656px;" width="15" height="14" viewBox="0 0 15 14"><path d="M6 3 H2 V12 H11 V8" fill="none" stroke="#0078d4" stroke-width="1.1"/><path d="M8 1.5 H13 V6.5 M13 1.5 L6.5 8" fill="none" stroke="#0078d4" stroke-width="1.1"/></svg>
<div class="r" style="left:29px;top:704px;width:116px;height:26px;background:#e1eefa;border-radius:13px;"></div>
<div class="t" style="left:46.40px;top:710.17px;font-size:13.5px;line-height:13.5px;color:#323130;transform:scaleX(1.0194);">Engines : <span style="-webkit-text-stroke:0.43px #323130">All</span></div>
<div class="r" style="left:155px;top:704px;width:433px;height:26px;background:#e1eefa;border-radius:13px;"></div>
<div class="t" style="left:173.00px;top:710.17px;font-size:13.5px;line-height:13.5px;color:#323130;transform:scaleX(1.0790);">Time range : <span style="-webkit-text-stroke:0.43px #323130">6/27/2025, 2:32:30 PM - 6/27/2025, 3:32:33 PM</span></div>
<div class="r" style="left:598px;top:704px;width:129px;height:26px;background:#e1eefa;border-radius:13px;"></div>
<div class="t" style="left:615.50px;top:710.17px;font-size:13.5px;line-height:13.5px;color:#323130;transform:scaleX(1.0405);">Group by : <span style="-webkit-text-stroke:0.43px #323130">5m</span></div>
<div class="r" style="left:737px;top:704px;width:107px;height:26px;background:#e1eefa;border-radius:13px;"></div>
<div class="t" style="left:755.00px;top:710.17px;font-size:13.5px;line-height:13.5px;color:#323130;transform:scaleX(0.9957);">Regions : <span style="-webkit-text-stroke:0.43px #323130">0</span></div>
<div class="t" style="left:33.00px;top:766.15px;font-size:14px;line-height:14px;-webkit-text-stroke:0.45px #323130;color:#323130;transform:scaleX(1.0598);">CPU percentage (Avg)</div>
<svg class="r" style="left:0px;top:0px" width="1640" height="1436" viewBox="0 0 1640 1436"><rect x="53" y="808" width="1572" height="1" fill="#ebebeb"/><rect x="53" y="824" width="1572" height="1" fill="#dcdcdc"/><rect x="53" y="854" width="1572" height="2" fill="#c8c8c8"/><rect x="53" y="885" width="1572" height="1" fill="#dcdcdc"/><rect x="53" y="917" width="1572" height="1" fill="#dcdcdc"/><rect x="53" y="947" width="1572" height="1" fill="#dcdcdc"/><rect x="800" y="948" width="1" height="4" fill="#d6d6d6"/><rect x="1553" y="948" width="1" height="4" fill="#d6d6d6"/><polyline points="101.5,856.1 171.2,868.6 297.0,872.0 423.0,868.0 548.6,872.6 674.0,872.6 800.0,871.0 925.0,876.1 1050.0,877.8 1175.0,874.1 1301.0,856.8 1426.0,847.8 1553.5,846.8" fill="none" stroke="#6074ee" stroke-width="2.2" stroke-linejoin="round" stroke-linecap="butt"/><polyline points="101.5,864.8 171.2,875.1 297.0,877.9 423.0,873.5 548.6,878.8 674.0,878.8 800.0,875.0 925.0,881.0 1050.0,882.0 1175.0,877.5 1301.0,857.5 1426.0,848.0 1553.5,847.5" fill="none" stroke="#2aa0a4" stroke-width="2.2" stroke-linejoin="round" stroke-linecap="butt"/><polyline points="101.5,864.8 171.2,875.7 297.0,878.8 423.0,874.8 548.6,879.4 674.0,879.0 800.0,873.5 925.0,882.0 1050.0,883.0 1175.0,878.5 1301.0,858.5 1426.0,849.2 1553.5,848.8" fill="none" stroke="#8b6fc6" stroke-width="2.2" stroke-linejoin="round" stroke-linecap="butt"/><polyline points="101.5,863.3 171.2,875.7 297.0,881.0 423.0,876.3 548.6,878.8 674.0,879.8 800.0,877.9 925.0,884.0 1050.0,884.5 1175.0,879.1 1301.0,859.0 1426.0,849.4 1553.5,849.0" fill="none" stroke="#e3008c" stroke-width="2.2" stroke-linejoin="round" stroke-linecap="butt"/></svg>
<div class="t" style="left:74.50px;top:812.17px;font-size:11.5px;line-height:11.5px;color:#6b6b6b;transform:scaleX(0.8820);">20%</div>
<div class="t" style="left:74.50px;top:842.67px;font-size:11.5px;line-height:11.5px;color:#6b6b6b;transform:scaleX(0.8820);">15%</div>
<div class="t" style="left:74.50px;top:873.97px;font-size:11.5px;line-height:11.5px;color:#6b6b6b;transform:scaleX(0.8820);">10%</div>
<div class="t" style="left:80.30px;top:905.17px;font-size:11.5px;line-height:11.5px;color:#6b6b6b;transform:scaleX(0.8724);">5%</div>
<div class="t" style="left:80.30px;top:935.67px;font-size:11.5px;line-height:11.5px;color:#6b6b6b;transform:scaleX(0.8724);">0%</div>
<div class="t" style="left:770.75px;top:959.57px;font-size:11.5px;line-height:11.5px;color:#6b6b6b;transform:scaleX(0.8971);">03:00:00 PM</div>
<div class="t" style="left:1524.25px;top:959.57px;font-size:11.5px;line-height:11.5px;color:#6b6b6b;transform:scaleX(0.8971);">03:30:00 PM</div>
<div class="r" style="left:1639px;top:813px;width:13px;height:13px;background:#6074ee;"></div>
<div class="t" style="left:1656.30px;top:812.07px;font-size:13.5px;line-height:13.5px;color:#323130;transform:scaleX(0.9194);">Engine 1</div>
<div class="r" style="left:1639px;top:838px;width:13px;height:13px;background:#e3008c;"></div>
<div class="t" style="left:1656.30px;top:836.87px;font-size:13.5px;line-height:13.5px;color:#323130;transform:scaleX(0.9194);">Engine 2</div>
<div class="r" style="left:1639px;top:862px;width:13px;height:13px;background:#2aa0a4;"></div>
<div class="t" style="left:1656.30px;top:861.67px;font-size:13.5px;line-height:13.5px;color:#323130;transform:scaleX(0.9194);">Engine 3</div>
<div class="r" style="left:1639px;top:887px;width:13px;height:13px;background:#8b6fc6;"></div>
<div class="t" style="left:1656.30px;top:886.47px;font-size:13.5px;line-height:13.5px;color:#323130;transform:scaleX(0.9194);">Engine 4</div>
<div class="r" style="left:64px;top:980px;width:5px;height:48px;background:#6074ee;"></div>
<div class="t" style="left:75.30px;top:979.77px;font-size:11.5px;line-height:11.5px;color:#323130;transform:scaleX(0.7797);">Engine 1</div>
<div class="t" style="left:74.60px;top:992.35px;font-size:43px;line-height:43px;color:#242424;transform:scaleX(0.8689);-webkit-text-stroke:1.1px #242424;">13.28</div>
<div class="t" style="left:174.60px;top:1014.41px;font-size:16px;line-height:16px;font-weight:700;color:#242424;transform:scaleX(0.9138);">%</div>
<div class="r" style="left:220px;top:980px;width:5px;height:48px;background:#e3008c;"></div>
<div class="t" style="left:231.50px;top:979.77px;font-size:11.5px;line-height:11.5px;color:#323130;transform:scaleX(0.7797);">Engine 2</div>
<div class="t" style="left:230.80px;top:992.35px;font-size:43px;line-height:43px;color:#242424;transform:scaleX(0.8745);-webkit-text-stroke:1.1px #242424;">12.29</div>
<div class="t" style="left:331.40px;top:1014.41px;font-size:16px;line-height:16px;font-weight:700;color:#242424;transform:scaleX(0.9138);">%</div>
<div class="r" style="left:376px;top:980px;width:5px;height:48px;background:#2aa0a4;"></div>
<div class="t" style="left:387.60px;top:979.77px;font-size:11.5px;line-height:11.5px;color:#323130;transform:scaleX(0.7797);">Engine 3</div>
<div class="t" style="left:386.90px;top:992.35px;font-size:43px;line-height:43px;color:#242424;transform:scaleX(0.8838);-webkit-text-stroke:1.1px #242424;">12.48</div>
<div class="t" style="left:488.50px;top:1014.41px;font-size:16px;line-height:16px;font-weight:700;color:#242424;transform:scaleX(0.9138);">%</div>
<div class="r" style="left:533px;top:980px;width:5px;height:48px;background:#8b6fc6;"></div>
<div class="t" style="left:544.10px;top:979.77px;font-size:11.5px;line-height:11.5px;color:#323130;transform:scaleX(0.7797);">Engine 4</div>
<div class="t" style="left:543.40px;top:992.35px;font-size:43px;line-height:43px;color:#242424;transform:scaleX(0.8745);-webkit-text-stroke:1.1px #242424;">12.38</div>
<div class="t" style="left:644.00px;top:1014.41px;font-size:16px;line-height:16px;font-weight:700;color:#242424;transform:scaleX(0.9138);">%</div>
<div class="t" style="left:1777.00px;top:766.15px;font-size:14px;line-height:14px;-webkit-text-stroke:0.45px #323130;color:#323130;transform:scaleX(1.1047);">Memory percentage (Avg)</div>
<svg class="r" style="left:1744px;top:0px" width="1640" height="1436" viewBox="0 0 1640 1436"><rect x="53" y="808" width="1572" height="1" fill="#ebebeb"/><rect x="53" y="841" width="1572" height="1" fill="#dcdcdc"/><rect x="53" y="877" width="1572" height="2" fill="#c8c8c8"/><rect x="53" y="912" width="1572" height="1" fill="#dcdcdc"/><rect x="53" y="947" width="1572" height="1" fill="#dcdcdc"/><rect x="800" y="948" width="1" height="4" fill="#d6d6d6"/><rect x="1553" y="948" width="1" height="4" fill="#d6d6d6"/><polyline points="101.5,892.9 171.2,885.5 297.0,885.0 423.0,884.5 548.6,884.5 674.0,883.3 800.0,874.0 925.0,873.2 1050.0,872.6 1175.0,872.2 1301.0,871.4 1426.0,850.8 1553.5,842.0" fill="none" stroke="#6074ee" stroke-width="2.2" stroke-linejoin="round" stroke-linecap="butt"/><polyline points="101.5,890.4 171.2,881.7 297.0,881.5 423.0,881.3 548.6,881.0 674.0,880.5 800.0,879.3 925.0,879.0 1050.0,878.7 1175.0,878.4 1301.0,878.2 1426.0,878.1 1553.5,878.1" fill="none" stroke="#2aa0a4" stroke-width="2.2" stroke-linejoin="round" stroke-linecap="butt"/><polyline points="101.5,888.9 171.2,879.9 297.0,879.5 423.0,879.2 548.6,879.0 674.0,878.5 800.0,878.0 925.0,877.5 1050.0,877.0 1175.0,876.8 1301.0,876.6 1426.0,876.6 1553.5,876.6" fill="none" stroke="#e3008c" stroke-width="2.2" stroke-linejoin="round" stroke-linecap="butt"/><polyline points="101.5,891.7 171.2,883.3 297.0,883.0 423.0,883.0 548.6,883.0 674.0,883.0 800.0,877.5 925.0,871.8 1050.0,871.2 1175.0,870.8 1301.0,869.6 1426.0,848.8 1553.5,840.0" fill="none" stroke="#8b6fc6" stroke-width="2.2" stroke-linejoin="round" stroke-linecap="butt"/></svg>
<div class="t" style="left:1818.50px;top:829.57px;font-size:11.5px;line-height:11.5px;color:#6b6b6b;transform:scaleX(0.8820);">30%</div>
<div class="t" style="left:1818.50px;top:865.27px;font-size:11.5px;line-height:11.5px;color:#6b6b6b;transform:scaleX(0.8820);">20%</div>
<div class="t" style="left:1818.50px;top:900.57px;font-size:11.5px;line-height:11.5px;color:#6b6b6b;transform:scaleX(0.8820);">10%</div>
<div class="t" style="left:1824.30px;top:935.87px;font-size:11.5px;line-height:11.5px;color:#6b6b6b;transform:scaleX(0.8724);">0%</div>
<div class="t" style="left:2514.75px;top:959.57px;font-size:11.5px;line-height:11.5px;color:#6b6b6b;transform:scaleX(0.8971);">03:00:00 PM</div>
<div class="t" style="left:3268.25px;top:959.57px;font-size:11.5px;line-height:11.5px;color:#6b6b6b;transform:scaleX(0.8971);">03:30:00 PM</div>
<div class="r" style="left:3383px;top:813px;width:13px;height:13px;background:#6074ee;"></div>
<div class="t" style="left:3400.30px;top:812.07px;font-size:13.5px;line-height:13.5px;color:#323130;transform:scaleX(0.9194);">Engine 1</div>
<div class="r" style="left:3383px;top:838px;width:13px;height:13px;background:#e3008c;"></div>
<div class="t" style="left:3400.30px;top:836.87px;font-size:13.5px;line-height:13.5px;color:#323130;transform:scaleX(0.9194);">Engine 2</div>
<div class="r" style="left:3383px;top:862px;width:13px;height:13px;background:#2aa0a4;"></div>
<div class="t" style="left:3400.30px;top:861.67px;font-size:13.5px;line-height:13.5px;color:#323130;transform:scaleX(0.9194);">Engine 3</div>
<div class="r" style="left:3383px;top:887px;width:13px;height:13px;background:#8b6fc6;"></div>
<div class="t" style="left:3400.30px;top:886.47px;font-size:13.5px;line-height:13.5px;color:#323130;transform:scaleX(0.9194);">Engine 4</div>
<div class="r" style="left:1808px;top:980px;width:5px;height:48px;background:#6074ee;"></div>
<div class="t" style="left:1819.30px;top:979.77px;font-size:11.5px;line-height:11.5px;color:#323130;transform:scaleX(0.7797);">Engine 1</div>
<div class="t" style="left:1818.60px;top:992.35px;font-size:43px;line-height:43px;color:#242424;transform:scaleX(0.8810);-webkit-text-stroke:1.1px #242424;">20.41</div>
<div class="t" style="left:1919.90px;top:1014.41px;font-size:16px;line-height:16px;font-weight:700;color:#242424;transform:scaleX(0.9138);">%</div>
<div class="r" style="left:1964px;top:980px;width:5px;height:48px;background:#e3008c;"></div>
<div class="t" style="left:1975.70px;top:979.77px;font-size:11.5px;line-height:11.5px;color:#323130;transform:scaleX(0.7797);">Engine 2</div>
<div class="t" style="left:1975.00px;top:992.35px;font-size:43px;line-height:43px;color:#242424;transform:scaleX(0.8782);-webkit-text-stroke:1.1px #242424;">19.42</div>
<div class="t" style="left:2076.00px;top:1014.41px;font-size:16px;line-height:16px;font-weight:700;color:#242424;transform:scaleX(0.9138);">%</div>
<div class="r" style="left:2121px;top:980px;width:5px;height:48px;background:#2aa0a4;"></div>
<div class="t" style="left:2132.30px;top:979.77px;font-size:11.5px;line-height:11.5px;color:#323130;transform:scaleX(0.7797);">Engine 3</div>
<div class="t" style="left:2131.60px;top:992.35px;font-size:43px;line-height:43px;color:#242424;transform:scaleX(0.8838);-webkit-text-stroke:1.1px #242424;">18.85</div>
<div class="t" style="left:2233.20px;top:1014.41px;font-size:16px;line-height:16px;font-weight:700;color:#242424;transform:scaleX(0.9138);">%</div>
<div class="r" style="left:2277px;top:980px;width:5px;height:48px;background:#8b6fc6;"></div>
<div class="t" style="left:2288.30px;top:979.77px;font-size:11.5px;line-height:11.5px;color:#323130;transform:scaleX(0.7797);">Engine 4</div>
<div class="t" style="left:2287.60px;top:992.35px;font-size:43px;line-height:43px;color:#242424;transform:scaleX(0.8810);-webkit-text-stroke:1.1px #242424;">20.84</div>
<div class="t" style="left:2388.90px;top:1014.41px;font-size:16px;line-height:16px;font-weight:700;color:#242424;transform:scaleX(0.9138);">%</div>
<svg class="r" style="left:0;top:0" width="60" height="1160" viewBox="0 0 60 1160"><circle cx="43.5" cy="1138.8" r="6.3" fill="none" stroke="#605e5c" stroke-width="1"/><rect x="43" y="1137.5" width="1" height="4.5" fill="#605e5c"/><rect x="43" y="1135" width="1" height="1.2" fill="#605e5c"/></svg>
<div class="t" style="left:33.00px;top:1096.15px;font-size:14px;line-height:14px;-webkit-text-stroke:0.45px #323130;color:#323130;transform:scaleX(1.1053);">Network bytes/sec (Avg)</div>
<svg class="r" style="left:0px;top:0px" width="1640" height="1436" viewBox="0 0 1640 1436"><rect x="53" y="1158" width="1572" height="1" fill="#ebebeb"/><rect x="53" y="1174" width="1572" height="1" fill="#dcdcdc"/><rect x="53" y="1204" width="1572" height="2" fill="#c8c8c8"/><rect x="53" y="1235" width="1572" height="1" fill="#dcdcdc"/><rect x="53" y="1267" width="1572" height="1" fill="#dcdcdc"/><rect x="53" y="1297" width="1572" height="1" fill="#dcdcdc"/><rect x="800" y="1298" width="1" height="4" fill="#d6d6d6"/><rect x="1553" y="1298" width="1" height="4" fill="#d6d6d6"/><polyline points="101.5,1192.6 130.0,1189.7 171.2,1186.3 234.0,1186.8 297.0,1187.3 360.0,1187.6 423.0,1187.9 486.0,1188.7 548.6,1189.8 611.0,1187.7 674.0,1185.7 737.0,1187.7 800.0,1189.5 862.0,1190.7 925.0,1191.9 988.0,1191.9 1050.0,1191.9 1112.0,1191.6 1175.0,1191.3 1238.0,1190.0 1301.0,1188.8 1363.0,1188.6 1426.0,1188.8 1490.0,1190.0 1553.5,1191.3" fill="none" stroke="#6074ee" stroke-width="2.2" stroke-linejoin="round" stroke-linecap="butt"/><polyline points="101.5,1192.7 130.0,1189.8 171.2,1186.4 234.0,1186.9 297.0,1187.4 360.0,1187.7 423.0,1188.0 486.0,1188.8 548.6,1189.9 611.0,1187.8 674.0,1185.8 737.0,1187.8 800.0,1189.6 862.0,1190.8 925.0,1192.0 988.0,1192.0 1050.0,1192.0 1112.0,1191.7 1175.0,1191.4 1238.0,1190.1 1301.0,1188.9 1363.0,1188.7 1426.0,1188.9 1490.0,1190.1 1553.5,1191.4" fill="none" stroke="#2aa0a4" stroke-width="2.2" stroke-linejoin="round" stroke-linecap="butt"/><polyline points="101.5,1192.1 130.0,1189.2 171.2,1185.8 234.0,1186.3 297.0,1186.8 360.0,1187.1 423.0,1187.4 486.0,1188.2 548.6,1189.3 611.0,1187.2 674.0,1185.2 737.0,1187.2 800.0,1189.0 862.0,1190.2 925.0,1191.4 988.0,1191.4 1050.0,1191.4 1112.0,1191.1 1175.0,1190.8 1238.0,1189.5 1301.0,1188.3 1363.0,1188.1 1426.0,1188.3 1490.0,1189.5 1553.5,1190.8" fill="none" stroke="#e3008c" stroke-width="2.2" stroke-linejoin="round" stroke-linecap="butt"/><polyline points="101.5,1192.4 130.0,1189.5 171.2,1186.1 234.0,1186.6 297.0,1187.1 360.0,1187.4 423.0,1187.7 486.0,1188.5 548.6,1189.6 611.0,1187.5 674.0,1185.5 737.0,1187.5 800.0,1189.3 862.0,1190.5 925.0,1191.7 988.0,1191.7 1050.0,1191.7 1112.0,1191.4 1175.0,1191.1 1238.0,1189.8 1301.0,1188.6 1363.0,1188.4 1426.0,1188.6 1490.0,1189.8 1553.5,1191.1" fill="none" stroke="#8b6fc6" stroke-width="2.2" stroke-linejoin="round" stroke-linecap="butt"/></svg>
<div class="t" style="left:58.80px;top:1162.37px;font-size:11.5px;line-height:11.5px;color:#6b6b6b;transform:scaleX(0.9234);">40MB/s</div>
<div class="t" style="left:58.80px;top:1192.77px;font-size:11.5px;line-height:11.5px;color:#6b6b6b;transform:scaleX(0.9234);">30MB/s</div>
<div class="t" style="left:58.80px;top:1223.87px;font-size:11.5px;line-height:11.5px;color:#6b6b6b;transform:scaleX(0.9234);">20MB/s</div>
<div class="t" style="left:59.80px;top:1255.37px;font-size:11.5px;line-height:11.5px;color:#6b6b6b;transform:scaleX(0.8977);">10MB/s</div>
<div class="t" style="left:64.80px;top:1285.37px;font-size:11.5px;line-height:11.5px;color:#6b6b6b;transform:scaleX(0.9205);">0MB/s</div>
<div class="t" style="left:770.75px;top:1310.57px;font-size:11.5px;line-height:11.5px;color:#6b6b6b;transform:scaleX(0.8971);">03:00:00 PM</div>
<div class="t" style="left:1524.25px;top:1310.57px;font-size:11.5px;line-height:11.5px;color:#6b6b6b;transform:scaleX(0.8971);">03:30:00 PM</div>
<div class="r" style="left:1639px;top:1163px;width:13px;height:13px;background:#6074ee;"></div>
<div class="t" style="left:1656.30px;top:1162.07px;font-size:13.5px;line-height:13.5px;color:#323130;transform:scaleX(0.9194);">Engine 1</div>
<div class="r" style="left:1639px;top:1188px;width:13px;height:13px;background:#e3008c;"></div>
<div class="t" style="left:1656.30px;top:1186.87px;font-size:13.5px;line-height:13.5px;color:#323130;transform:scaleX(0.9194);">Engine 2</div>
<div class="r" style="left:1639px;top:1212px;width:13px;height:13px;background:#2aa0a4;"></div>
<div class="t" style="left:1656.30px;top:1211.67px;font-size:13.5px;line-height:13.5px;color:#323130;transform:scaleX(0.9194);">Engine 3</div>
<div class="r" style="left:1639px;top:1237px;width:13px;height:13px;background:#8b6fc6;"></div>
<div class="t" style="left:1656.30px;top:1236.47px;font-size:13.5px;line-height:13.5px;color:#323130;transform:scaleX(0.9194);">Engine 4</div>
<div class="r" style="left:64px;top:1330px;width:5px;height:48px;background:#6074ee;"></div>
<div class="t" style="left:75.30px;top:1330.57px;font-size:11.5px;line-height:11.5px;color:#323130;transform:scaleX(0.7797);">Engine 1</div>
<div class="t" style="left:74.60px;top:1342.30px;font-size:43px;line-height:43px;color:#242424;transform:scaleX(0.9516);-webkit-text-stroke:1.1px #242424;">34.84</div>
<div class="t" style="left:183.50px;top:1362.66px;font-size:18px;line-height:18px;font-weight:700;color:#242424;transform:scaleX(0.9022);">MB/s</div>
<div class="r" style="left:253px;top:1330px;width:5px;height:48px;background:#e3008c;"></div>
<div class="t" style="left:263.90px;top:1330.57px;font-size:11.5px;line-height:11.5px;color:#323130;transform:scaleX(0.7797);">Engine 2</div>
<div class="t" style="left:263.20px;top:1342.30px;font-size:43px;line-height:43px;color:#242424;transform:scaleX(0.8736);-webkit-text-stroke:1.1px #242424;">34.91</div>
<div class="t" style="left:363.70px;top:1362.66px;font-size:18px;line-height:18px;font-weight:700;color:#242424;transform:scaleX(0.9022);">MB/s</div>
<div class="r" style="left:435px;top:1330px;width:5px;height:48px;background:#2aa0a4;"></div>
<div class="t" style="left:446.30px;top:1330.57px;font-size:11.5px;line-height:11.5px;color:#323130;transform:scaleX(0.7797);">Engine 3</div>
<div class="t" style="left:445.60px;top:1342.30px;font-size:43px;line-height:43px;color:#242424;transform:scaleX(0.9340);-webkit-text-stroke:1.1px #242424;">34.88</div>
<div class="t" style="left:552.60px;top:1362.66px;font-size:18px;line-height:18px;font-weight:700;color:#242424;transform:scaleX(0.9022);">MB/s</div>
<div class="r" style="left:623px;top:1330px;width:5px;height:48px;background:#8b6fc6;"></div>
<div class="t" style="left:634.30px;top:1330.57px;font-size:11.5px;line-height:11.5px;color:#323130;transform:scaleX(0.7797);">Engine 4</div>
<div class="t" style="left:633.60px;top:1342.30px;font-size:43px;line-height:43px;color:#242424;transform:scaleX(0.9433);-webkit-text-stroke:1.1px #242424;">34.86</div>
<div class="t" style="left:741.60px;top:1362.66px;font-size:18px;line-height:18px;font-weight:700;color:#242424;transform:scaleX(0.9022);">MB/s</div>
<div class="t" style="left:1777.00px;top:1096.15px;font-size:14px;line-height:14px;-webkit-text-stroke:0.45px #323130;color:#323130;transform:scaleX(1.0911);">Virtual users (Max)</div>
<svg class="r" style="left:1744px;top:0px" width="1640" height="1436" viewBox="0 0 1640 1436"><rect x="53" y="1139" width="1572" height="1" fill="#ebebeb"/><rect x="53" y="1154" width="1572" height="1" fill="#dcdcdc"/><rect x="53" y="1179" width="1572" height="1" fill="#dcdcdc"/><rect x="53" y="1204" width="1572" height="1" fill="#dcdcdc"/><rect x="53" y="1228" width="1572" height="2" fill="#c8c8c8"/><rect x="53" y="1253" width="1572" height="1" fill="#dcdcdc"/><rect x="53" y="1278" width="1572" height="1" fill="#dcdcdc"/><rect x="800" y="1279" width="1" height="4" fill="#d6d6d6"/><rect x="1553" y="1279" width="1" height="4" fill="#d6d6d6"/><polyline points="101.5,1187.3 170.5,1169.5 297.0,1169.5 423.0,1169.5 548.6,1169.5 674.0,1169.5 800.0,1169.5 925.0,1169.5 1050.0,1169.5 1175.0,1169.5 1301.0,1169.5 1426.0,1169.5 1500.0,1169.6 1553.5,1170.3" fill="none" stroke="#6074ee" stroke-width="2.2" stroke-linejoin="round" stroke-linecap="butt"/><polyline points="101.5,1187.3 170.5,1169.5 297.0,1169.5 423.0,1169.5 548.6,1169.5 674.0,1169.5 800.0,1169.5 925.0,1169.5 1050.0,1169.5 1175.0,1169.5 1301.0,1169.5 1426.0,1169.5 1500.0,1169.6 1553.5,1170.3" fill="none" stroke="#e3008c" stroke-width="2.2" stroke-linejoin="round" stroke-linecap="butt"/><polyline points="101.5,1187.3 170.5,1169.5 297.0,1169.5 423.0,1169.5 548.6,1169.5 674.0,1169.5 800.0,1169.5 925.0,1169.5 1050.0,1169.5 1175.0,1169.5 1301.0,1169.5 1426.0,1169.5 1500.0,1169.6 1553.5,1170.3" fill="none" stroke="#2aa0a4" stroke-width="2.2" stroke-linejoin="round" stroke-linecap="butt"/><polyline points="101.5,1187.3 170.5,1169.5 297.0,1169.5 423.0,1169.5 548.6,1169.5 674.0,1169.5 800.0,1169.5 925.0,1169.5 1050.0,1169.5 1175.0,1169.5 1301.0,1169.5 1426.0,1169.5 1500.0,1169.6 1553.5,1170.3" fill="none" stroke="#8b6fc6" stroke-width="2.2" stroke-linejoin="round" stroke-linecap="butt"/></svg>
<div class="t" style="left:1821.30px;top:1142.47px;font-size:11.5px;line-height:11.5px;color:#6b6b6b;transform:scaleX(0.9121);">250</div>
<div class="t" style="left:1821.30px;top:1167.67px;font-size:11.5px;line-height:11.5px;color:#6b6b6b;transform:scaleX(0.9121);">200</div>
<div class="t" style="left:1821.30px;top:1192.47px;font-size:11.5px;line-height:11.5px;color:#6b6b6b;transform:scaleX(0.9121);">150</div>
<div class="t" style="left:1821.30px;top:1216.87px;font-size:11.5px;line-height:11.5px;color:#6b6b6b;transform:scaleX(0.9121);">100</div>
<div class="t" style="left:1826.80px;top:1241.37px;font-size:11.5px;line-height:11.5px;color:#6b6b6b;transform:scaleX(0.9381);">50</div>
<div class="t" style="left:1832.80px;top:1266.17px;font-size:11.5px;line-height:11.5px;color:#6b6b6b;transform:scaleX(0.9381);">0</div>
<div class="t" style="left:2514.75px;top:1290.67px;font-size:11.5px;line-height:11.5px;color:#6b6b6b;transform:scaleX(0.8971);">03:00:00 PM</div>
<div class="t" style="left:3268.25px;top:1290.67px;font-size:11.5px;line-height:11.5px;color:#6b6b6b;transform:scaleX(0.8971);">03:30:00 PM</div>
<div class="r" style="left:3383px;top:1143px;width:13px;height:13px;background:#6074ee;"></div>
<div class="t" style="left:3400.30px;top:1142.77px;font-size:13.5px;line-height:13.5px;color:#323130;transform:scaleX(0.9194);">Engine 1</div>
<div class="r" style="left:3383px;top:1168px;width:13px;height:13px;background:#e3008c;"></div>
<div class="t" style="left:3400.30px;top:1167.57px;font-size:13.5px;line-height:13.5px;color:#323130;transform:scaleX(0.9194);">Engine 2</div>
<div class="r" style="left:3383px;top:1193px;width:13px;height:13px;background:#2aa0a4;"></div>
<div class="t" style="left:3400.30px;top:1192.37px;font-size:13.5px;line-height:13.5px;color:#323130;transform:scaleX(0.9194);">Engine 3</div>
<div class="r" style="left:3383px;top:1218px;width:13px;height:13px;background:#8b6fc6;"></div>
<div class="t" style="left:3400.30px;top:1217.17px;font-size:13.5px;line-height:13.5px;color:#323130;transform:scaleX(0.9194);">Engine 4</div>
<div class="r" style="left:1808px;top:1311px;width:5px;height:49px;background:#6074ee;"></div>
<div class="t" style="left:1819.30px;top:1311.27px;font-size:11.5px;line-height:11.5px;color:#323130;transform:scaleX(0.7797);">Engine 1</div>
<div class="t" style="left:1818.60px;top:1323.10px;font-size:43px;line-height:43px;color:#242424;transform:scaleX(0.9687);-webkit-text-stroke:1.1px #242424;">220</div>
<div class="r" style="left:1924px;top:1311px;width:5px;height:49px;background:#e3008c;"></div>
<div class="t" style="left:1935.50px;top:1311.27px;font-size:11.5px;line-height:11.5px;color:#323130;transform:scaleX(0.7797);">Engine 2</div>
<div class="t" style="left:1934.80px;top:1323.10px;font-size:43px;line-height:43px;color:#242424;transform:scaleX(0.9687);-webkit-text-stroke:1.1px #242424;">220</div>
<div class="r" style="left:2041px;top:1311px;width:5px;height:49px;background:#2aa0a4;"></div>
<div class="t" style="left:2052.60px;top:1311.27px;font-size:11.5px;line-height:11.5px;color:#323130;transform:scaleX(0.7797);">Engine 3</div>
<div class="t" style="left:2051.90px;top:1323.10px;font-size:43px;line-height:43px;color:#242424;transform:scaleX(0.9687);-webkit-text-stroke:1.1px #242424;">220</div>
<div class="r" style="left:2158px;top:1311px;width:5px;height:49px;background:#8b6fc6;"></div>
<div class="t" style="left:2168.90px;top:1311.27px;font-size:11.5px;line-height:11.5px;color:#323130;transform:scaleX(0.7797);">Engine 4</div>
<div class="t" style="left:2168.20px;top:1323.10px;font-size:43px;line-height:43px;color:#242424;transform:scaleX(0.9687);-webkit-text-stroke:1.1px #242424;">220</div></body></html>
